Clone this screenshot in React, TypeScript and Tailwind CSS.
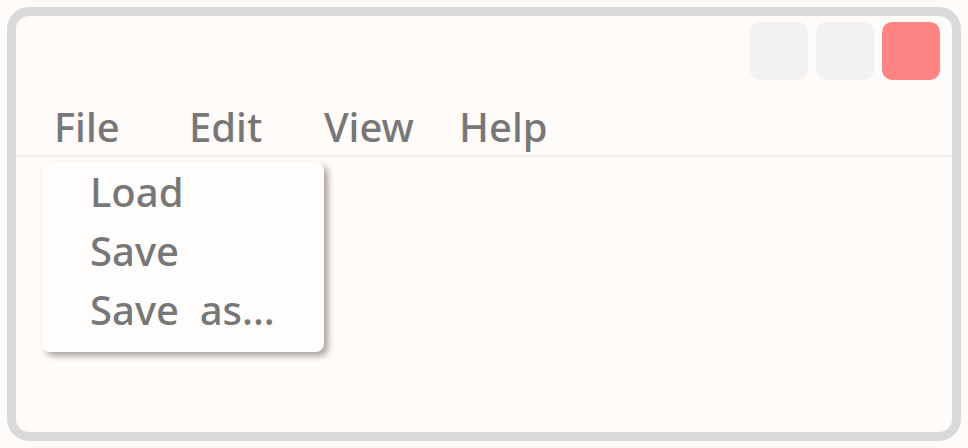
export default function App() {
  const menus = ['File', 'Edit', 'View', 'Help']
  const items = ['Load', 'Save', 'Save  as...']

  return (
    <div className="w-[968px] h-[448px] bg-[#fffbf8] p-[7px]" style={{ fontFamily: '"Noto Sans", sans-serif' }}>
      <div className="relative h-full rounded-[22px] border-[9px] border-[#d9d9d9] bg-[#fffbf8] flex flex-col">
        {/* title bar buttons */}
        <div className="flex justify-end gap-2 pt-[6px] pr-[12px]">
          <div className="w-[58px] h-[58px] rounded-[10px] bg-[#f2f2f2]" />
          <div className="w-[58px] h-[58px] rounded-[10px] bg-[#f2f2f2]" />
          <div className="w-[58px] h-[58px] rounded-[10px] bg-[#ff8585]" />
        </div>

        {/* menu bar */}
        <div className="flex pl-[38px] h-[77px] pt-[18px] items-center border-b-2 border-[#efedeb] text-[40px] font-medium text-[#777777]">
          {menus.map((m) => (
            <div key={m} className="w-[135px] leading-none">{m}</div>
          ))}
        </div>

        {/* dropdown */}
        <div className="absolute left-[26px] top-[146px] w-[282px] h-[190px] rounded-[8px] bg-[#fffdfb] shadow-[4px_4px_6px_rgba(0,0,0,0.35)] pl-[48px] flex flex-col text-[40px] font-medium text-[#777777]">
          {items.map((it) => (
            <div key={it} className="h-[59px] flex items-center whitespace-pre leading-none">{it}</div>
          ))}
        </div>
      </div>
    </div>
  )
}
